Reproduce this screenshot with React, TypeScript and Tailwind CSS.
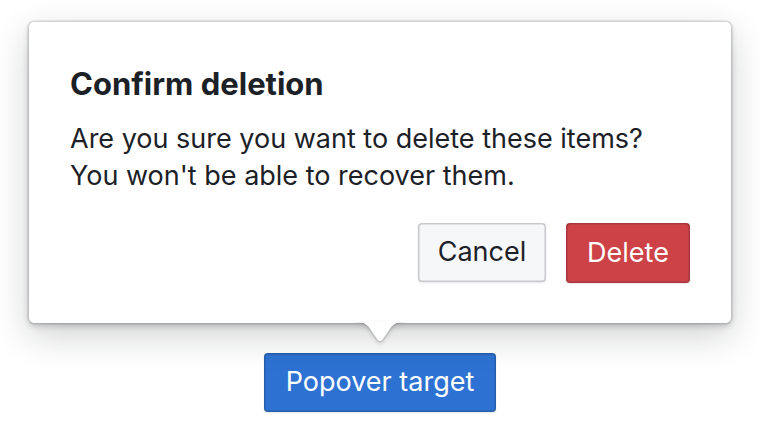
import React from "react";

export default function App() {
  return (
    <div
      className="w-[760px] h-[432px] bg-white flex flex-col items-center pt-[22px] text-[#1c2127]"
      style={{ fontFamily: "Inter, 'Noto Sans', sans-serif" }}
    >
      <div className="relative w-[702px] h-[301px] rounded-[5px] bg-white px-[41px] pt-[44px] shadow-[0_0_0_1.5px_rgba(17,20,24,0.12),0_3px_6px_rgba(17,20,24,0.2),0_12px_36px_rgba(17,20,24,0.2)] flex flex-col">
        <h4 className="text-[31px] font-bold leading-[36px]">Confirm deletion</h4>
        <p className="mt-[18px] text-[27px] leading-[37px]">
          Are you sure you want to delete these items?
          <br />
          You won't be able to recover them.
        </p>
        <div className="mt-[29px] flex justify-end gap-[20px]">
          <button className="w-[128px] h-[59px] rounded-[4px] bg-[#f6f7f9] text-[27px] text-[#1c2127] shadow-[inset_0_0_0_1.5px_rgba(17,20,24,0.2),0_1px_2px_rgba(17,20,24,0.1)]">
            Cancel
          </button>
          <button className="w-[124px] h-[60px] rounded-[4px] bg-[#cd4246] text-[27px] text-white shadow-[inset_0_0_0_1.5px_rgba(17,20,24,0.2),0_1px_2px_rgba(17,20,24,0.1)]">
            Delete
          </button>
        </div>
        <svg
          className="absolute left-1/2 top-full -translate-x-1/2 -mt-[1px]"
          width="48"
          height="22"
          viewBox="0 0 48 22"
          style={{ filter: "drop-shadow(0 2px 2px rgba(17,20,24,0.18))" }}
        >
          <path
            d="M0 0 C6 0 9 1.5 12 4.5 L21 17.5 Q24 21.5 27 17.5 L36 4.5 C39 1.5 42 0 48 0 Z"
            fill="white"
          />
          <path
            d="M0 0.2 C6 0.2 9 1.7 12 4.7 L21 17.7 Q24 21.7 27 17.7 L36 4.7 C39 1.7 42 0.2 48 0.2"
            fill="none"
            stroke="rgba(17,20,24,0.15)"
            strokeWidth="1.2"
          />
          <rect x="0" y="-1" width="48" height="1.5" fill="white" />
        </svg>
      </div>
      <button className="mt-[30px] w-[232px] h-[59px] rounded-[4px] bg-[#2d72d2] text-[27px] text-white shadow-[inset_0_0_0_1.5px_rgba(17,20,24,0.2),0_1px_2px_rgba(17,20,24,0.1)]">
        Popover target
      </button>
    </div>
  );
}
